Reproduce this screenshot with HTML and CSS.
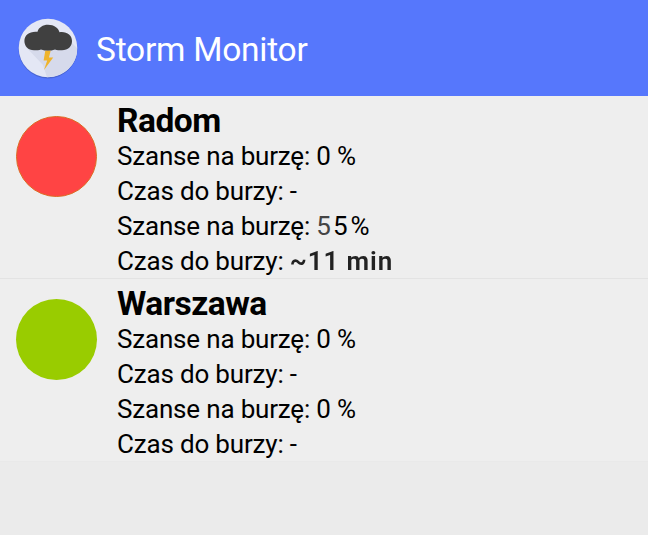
FILE: index.html
```html
<!DOCTYPE html>
<html lang="pl">
<head>
<meta charset="utf-8">
<title>Storm Monitor</title>
<link rel="stylesheet" href="styles.css">
</head>
<body>
<header class="app-bar">
  <svg class="logo" viewBox="0 0 64 64" aria-hidden="true">
    <circle class="logo-shadow" cx="32" cy="33" r="29.500"/>
    <circle class="logo-disc" cx="32" cy="32" r="29.300"/>
    <path class="logo-cast" d="M10 31 L27 49 L31 61.200 Q47 61 56 49 Q62 40 61 32 L55 26Z"/>
    <path class="logo-cloud" d="M18 34.300C12 34.300 8.400 30.100 8.400 25C8.400 18.500 14 15 21.500 15.800C22.500 11.500 27 8.800 32 8.800C38 8.800 42.500 12 43.500 16.200C50.500 15.200 56 19 56 25C56 30.400 52 34.300 46 34.300C43 34.300 41 34.200 39 33.500Q32 36 25 33.500C23 34.200 21 34.300 18 34.300Z"/>
    <path class="logo-bolt" d="M29.300 34.700 L27.600 44.500 L31.200 44.500 L28 54 L37.200 41.600 L32.900 41.600 L34.700 34.700Z"/>
  </svg>
  <h1 class="app-title">Storm Monitor</h1>
</header>
<main class="cities">
  <section class="city">
    <div class="status status-danger"></div>
    <div class="details">
      <h2 class="name">Radom</h2>
      <p class="line">Szanse na burzę: 0 %</p>
      <p class="line">Czas do burzy: -</p>
      <p class="line">Szanse na burzę: <span class="chance"><span class="faded">5</span>5</span><span>%</span></p>
      <p class="line">Czas do burzy: <span class="eta">~11 min</span></p>
    </div>
  </section>
  <section class="city">
    <div class="status status-calm"></div>
    <div class="details">
      <h2 class="name">Warszawa</h2>
      <p class="line">Szanse na burzę: 0 %</p>
      <p class="line">Czas do burzy: -</p>
      <p class="line">Szanse na burzę: 0 %</p>
      <p class="line">Czas do burzy: -</p>
    </div>
  </section>
</main>
</body>
</html>
```
FILE: styles.css
```css
* { box-sizing: border-box; }
body {
  margin: 0;
  min-height: 535px;
  background: #ebebeb;
  color: #000;
  font-family: Roboto, "Liberation Sans", sans-serif;
}
h1, h2, p { margin: 0; }
.app-bar {
  display: flex;
  align-items: center;
  height: 96px;
  padding-left: 16px;
  background: #5677fc;
}
.logo { width: 64px; height: 64px; }
.logo-shadow { fill: #405bbd; opacity: .65; }
.logo-disc { fill: #e4e7f5; }
.logo-cast { fill: #d6daeb; }
.logo-cloud { fill: #404040; }
.logo-bolt { fill: #efb42c; }
.app-title {
  margin: 4px 0 0 16px;
  color: #fff;
  font-size: 33.500px;
  font-weight: 400;
  line-height: 40px;
  letter-spacing: -.25px;
  white-space: nowrap;
}
.city {
  display: flex;
  height: 183px;
  padding-left: 16px;
  background: #eee;
  border-bottom: 1px solid #e3e3e3;
}
.city:last-child { border-bottom-color: #e9e9e9; }
.status {
  width: 81px;
  height: 81px;
  margin: 20px 20px 0 0;
  border-radius: 50%;
}
.status-danger { background: #f44; border: 1px solid #dc6c22; }
.status-calm { background: #9c0; }
.details { padding-top: 5px; white-space: nowrap; }
.name {
  font-size: 33.500px;
  font-weight: 700;
  line-height: 39px;
  letter-spacing: -.5px;
  margin-bottom: -1px;
}
.line { font-size: 26px; line-height: 34.900px; letter-spacing: -.18px; }
.chance { margin-right: 1px; letter-spacing: 2px; }
.faded { color: #444; }
.eta {
  display: inline-block;
  font-weight: 600;
  color: #222;
  letter-spacing: .9px;
  filter: blur(.6px);
}
```
